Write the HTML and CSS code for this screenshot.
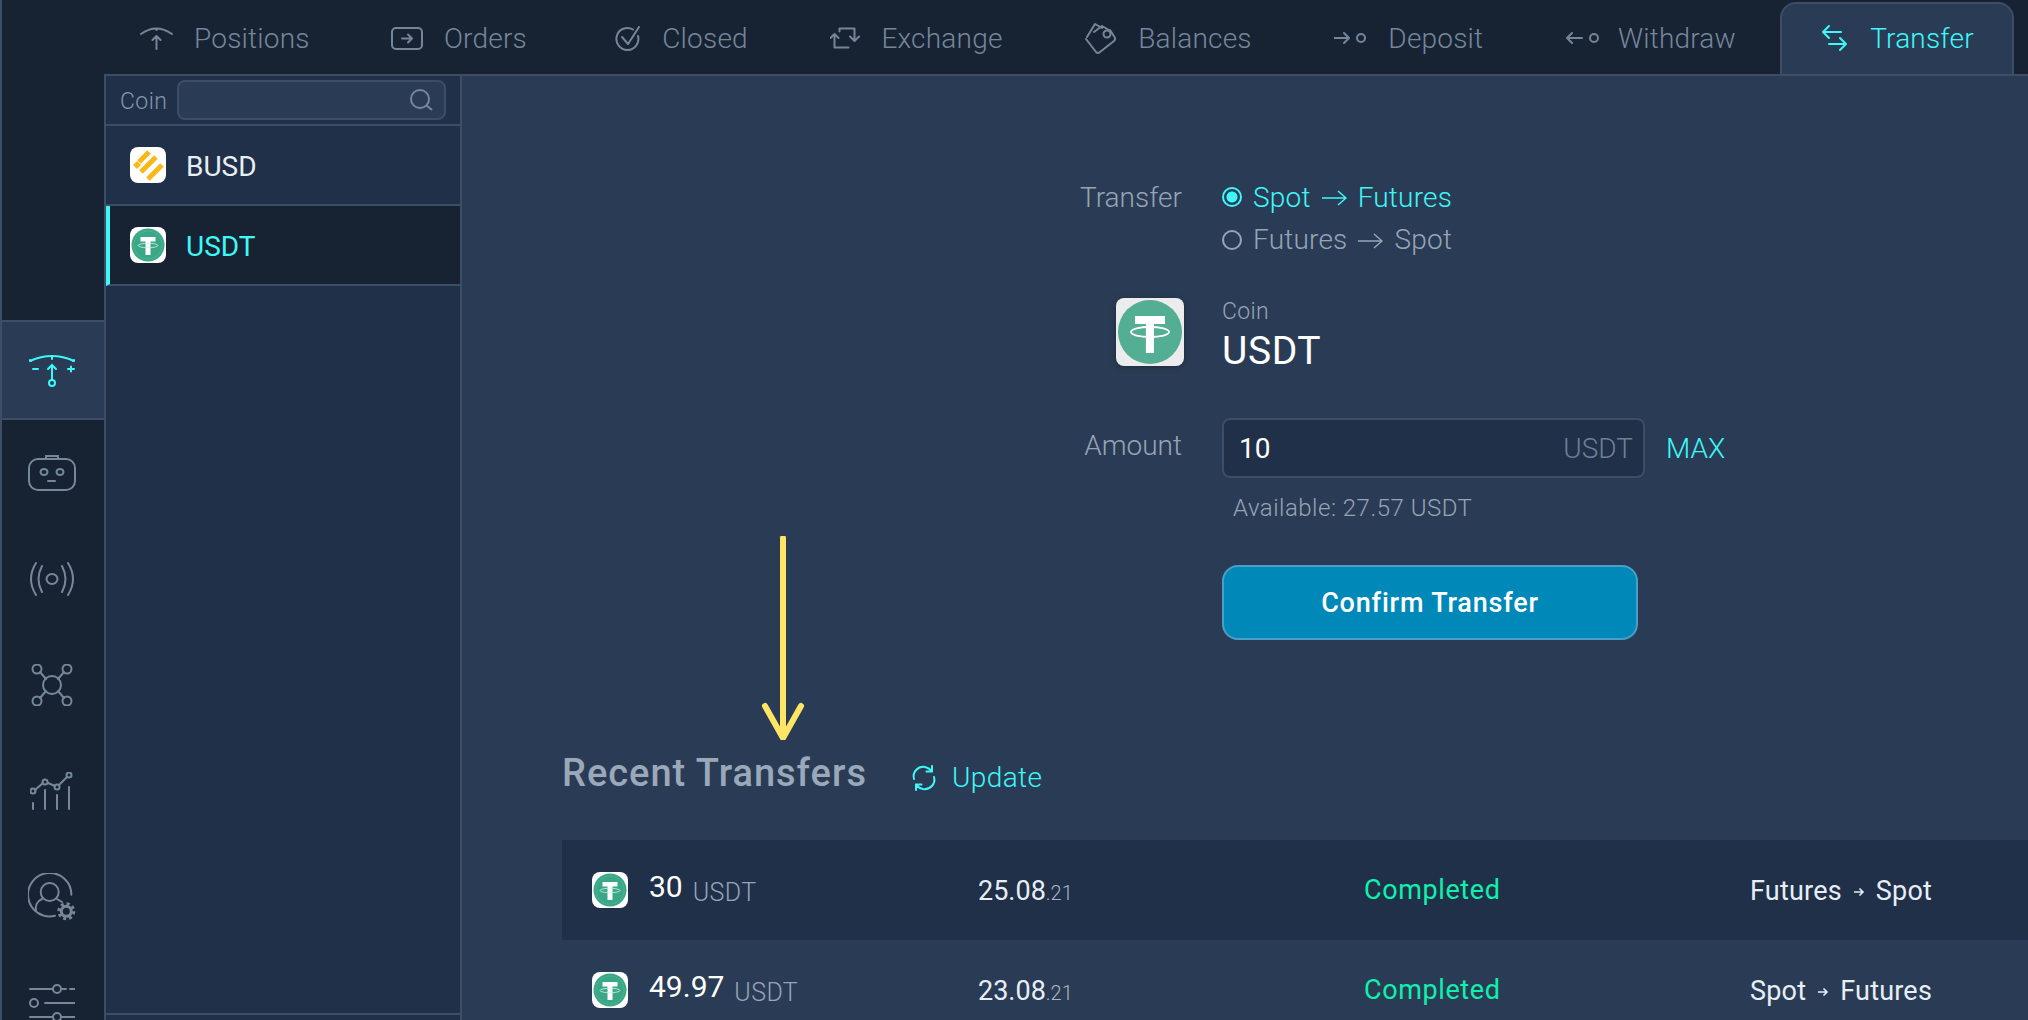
FILE: index.html
```html
<!DOCTYPE html>
<html lang="en-US">
<head>
  <meta charset="UTF-8">
  <meta name="viewport" content="width=device-width">
  <title>Transfer</title>
  <link rel="stylesheet" href="styles.css">
</head>
<body>

<svg class="defs" width="0" height="0">
  <symbol id="usdt" viewBox="0 0 36 36">
    <rect width="36" height="36" rx="8" fill="#fff"/>
    <circle cx="18" cy="18" r="16.500" fill="#3aa886"/>
    <circle cx="18" cy="18" r="14" fill="none" stroke="#62bda2" stroke-width="1" stroke-dasharray="1 1"/>
    <path d="M10.500 10h15v4.500h-5v13.500h-5V14.500h-5z" fill="#fff"/>
    <ellipse cx="18" cy="18.500" rx="10" ry="2.200" fill="none" stroke="#d5efe6" stroke-width=".8"/>
  </symbol>
  <symbol id="busd" viewBox="0 0 36 36">
    <rect width="36" height="36" rx="8" fill="#fff"/>
    <path d="M19 5L9 15M26 10L11 25M32 18L18 32" fill="none" stroke="#f8b916" stroke-width="5"/>
    <path d="M7 14l4 4-4 4-4-4z" fill="#f8b916"/>
  </symbol>
  <symbol id="arrow" viewBox="0 0 25 16">
    <path d="M0 8h24M16 1l8 7-8 7" fill="none" stroke="currentColor" stroke-width="1.500"/>
  </symbol>
  <symbol id="small-arrow" viewBox="0 0 12 12">
    <path d="M1 6h9M6.500 2.500L10 6l-3.500 3.500" fill="none" stroke="currentColor" stroke-width="1.600"/>
  </symbol>
</svg>

<div class="app">
  <nav class="rail">
    <a class="rail-item active">
      <svg width="48" height="36" viewBox="0 0 48 36" fill="none">
        <path d="M2 9Q24-1 46 9"/><path d="M24 4v3M3 9l-1-1M45 9l1-1"/>
        <path d="M5 17h5M40 17h6M43 14.500v5"/>
        <path d="M24 28V13M20 17l4-4 4 4"/><circle cx="24" cy="31" r="3"/>
      </svg>
    </a>
    <a class="rail-item">
      <svg width="48" height="38" viewBox="0 0 48 38" fill="none">
        <rect x="1" y="5" width="46" height="31" rx="9"/><path d="M18 5V2h12v3"/>
        <ellipse cx="16" cy="18" rx="3.500" ry="3"/><ellipse cx="32" cy="18" rx="3.500" ry="3"/><path d="M20 27h7"/>
      </svg>
    </a>
    <a class="rail-item">
      <svg width="46" height="34" viewBox="0 0 46 34" fill="none">
        <ellipse cx="23" cy="17" rx="5.500" ry="5"/>
        <path d="M13 4Q6 17 13 30M33 4q7 13 0 26M7 1Q-3 17 7 33M39 1q10 16 0 32"/>
      </svg>
    </a>
    <a class="rail-item">
      <svg width="42" height="42" viewBox="0 0 42 42" fill="none">
        <ellipse cx="21" cy="21" rx="9" ry="9"/>
        <circle cx="6" cy="5" r="4.500"/><circle cx="36" cy="5" r="4.500"/><circle cx="6" cy="37" r="4.500"/><circle cx="36" cy="37" r="4.500"/>
        <path d="M9 8l6 7M33 8l-6 7M9 34l6-7M33 34l-6-7"/>
      </svg>
    </a>
    <a class="rail-item">
      <svg width="44" height="38" viewBox="0 0 44 38" fill="none">
        <circle cx="3" cy="19" r="2.500"/><circle cx="15" cy="10" r="2.500"/><circle cx="27" cy="15" r="2.500"/><circle cx="39" cy="3" r="2.500"/>
        <path d="M5 18l8-7M18 11l7 3M29 13l8-8"/>
        <path d="M3 31v6M15 18v19M27 23v14M39 15v22"/>
      </svg>
    </a>
    <a class="rail-item">
      <svg width="48" height="48" viewBox="0 0 48 48" fill="none">
        <path d="M27 42.700A21.700 21.700 0 1 1 43.400 21.700"/>
        <circle cx="21.700" cy="19" r="9"/>
        <path d="M8 38c-1-5 1-10 6-12M29 26l5 3"/>
        <circle cx="38.300" cy="38.300" r="5" stroke-width="3"/>
        <circle cx="38.300" cy="38.300" r="7.500" stroke-width="3" stroke-dasharray="3 2.900" stroke-linecap="butt"/>
      </svg>
    </a>
    <a class="rail-item">
      <svg width="46" height="38" viewBox="0 0 46 38" fill="none">
        <path d="M1 5h23M33 5h4M41 5h5"/><circle cx="28" cy="5" r="4"/>
        <circle cx="5" cy="19" r="4"/><path d="M16 19h30"/>
        <path d="M1 33h23M33 33h13"/><circle cx="28" cy="33" r="4"/>
      </svg>
    </a>
  </nav>

  <div class="main">
    <div class="tabs">
      <a class="tab first">
        <svg width="33" height="24" viewBox="0 0 33 24" fill="none"><path d="M1 8Q16-3 32 8M16.500 3v1M16.500 23V10M12.500 14l4-4 4 4"/></svg>
        <span>Positions</span>
      </a>
      <a class="tab">
        <svg width="32" height="23" viewBox="0 0 32 23" fill="none"><rect x="1" y="1" width="30" height="21" rx="4"/><path d="M11 11.500h10M17 7.500l4 4-4 4"/></svg>
        <span>Orders</span>
      </a>
      <a class="tab closed">
        <svg width="26" height="25" viewBox="0 0 26 25" fill="none"><path d="M18 3.500A11 11 0 1 0 23 10M7 11l6 7L24 1"/></svg>
        <span>Closed</span>
      </a>
      <a class="tab">
        <svg width="30" height="22" viewBox="0 0 30 22" fill="none"><path d="M9.500 4.500V1.500h15V14M20 9.500l4.500 4.500 4.500-4.500M4.500 7v13.500h14M.5 11l4-4 4 4"/></svg>
        <span>Exchange</span>
      </a>
      <a class="tab">
        <svg width="32" height="32" viewBox="0 0 32 32" fill="none">
          <path d="M1 17L11 30Q13 32 15 30L29 19Q31 17 29.500 15L25 8M2 15L10 2l7 4M9 10l8-6 7 4"/>
          <circle cx="22" cy="12" r="3.500"/>
        </svg>
        <span>Balances</span>
      </a>
      <a class="tab">
        <svg width="33" height="14" viewBox="0 0 33 14" fill="none"><path d="M0 7h15M10 2l5 5-5 5"/><circle cx="27" cy="7" r="4"/></svg>
        <span>Deposit</span>
      </a>
      <a class="tab withdraw">
        <svg width="34" height="14" viewBox="0 0 34 14" fill="none"><path d="M16 7H1M6 2L1 7l5 5"/><circle cx="28" cy="7" r="4"/></svg>
        <span>Withdraw</span>
      </a>
      <a class="tab current">
        <svg width="25" height="26" viewBox="0 0 25 26" fill="none"><path d="M19 7H1M7 1L1 7l6 6M7 19h17M18 13l6 6-6 6"/></svg>
        <span>Transfer</span>
      </a>
    </div>

    <div class="body">
      <aside class="coins">
        <div class="coins-head">
          <span>Coin</span>
          <div class="search">
            <svg width="23" height="22" viewBox="0 0 23 22" fill="none"><circle cx="10" cy="10" r="9"/><path d="M16.500 16.500L22 21"/></svg>
          </div>
        </div>
        <div class="coin"><svg class="coin-icon"><use href="#busd"/></svg><span>BUSD</span></div>
        <div class="coin selected"><svg class="coin-icon"><use href="#usdt"/></svg><span>USDT</span></div>
        <div class="coins-list"></div>
        <div class="coins-foot"></div>
      </aside>

      <section class="content">
        <svg class="note-arrow" width="44" height="204" viewBox="0 0 44 204" fill="none">
          <path d="M22 2v198M4 170l18 32 18-32"/>
        </svg>

        <div class="form">
          <div class="label">Transfer</div>
          <div class="radios">
            <div class="radio on"><i></i>Spot<svg class="long-arrow"><use href="#arrow"/></svg>Futures</div>
            <div class="radio"><i></i>Futures<svg class="long-arrow"><use href="#arrow"/></svg>Spot</div>
          </div>

          <div class="big-icon">
            <svg width="68" height="68" viewBox="0 0 68 68">
              <rect width="68" height="68" rx="8" fill="#ececec"/>
              <circle cx="34" cy="34" r="32" fill="#53ae94"/>
              <path d="M19 18h30v8H38v8.500l-.1 20.500h-8V26H19z" fill="#fff"/>
              <ellipse cx="34" cy="34" rx="19" ry="5" fill="none" stroke="#fff" stroke-width="1.800"/>
            </svg>
          </div>
          <div class="coin-name">
            <small>Coin</small>
            <strong>USDT</strong>
          </div>

          <div class="label amount-label">Amount</div>
          <div class="amount-row">
            <div class="amount">
              <span class="value">10</span>
              <span class="unit">USDT</span>
            </div>
            <a class="max">MAX</a>
          </div>

          <div></div>
          <div class="available">Available: 27.57 USDT</div>

          <div></div>
          <button class="confirm">Confirm Transfer</button>
        </div>

        <div class="recent-head">
          <h2>Recent Transfers</h2>
          <a class="update">
            <svg width="26" height="26" viewBox="0 0 26 26" fill="none">
              <path d="M3 14C1 7 7 1 14 2c3 .500 5 2 7 4M21 1v5.500h-5.500M23 12c2 7-4 13-11 12-3-.500-5-2-7-4M5 25v-5.500h5.500"/>
            </svg>
            Update
          </a>
        </div>

        <div class="row dark">
          <div class="cell"><svg class="coin-icon"><use href="#usdt"/></svg><span class="qty">30</span><span class="qty-unit">USDT</span></div>
          <div class="date">25.08<small>.21</small></div>
          <div class="status">Completed</div>
          <div class="route">Futures<svg class="route-arrow"><use href="#small-arrow"/></svg>Spot</div>
        </div>
        <div class="row">
          <div class="cell"><svg class="coin-icon"><use href="#usdt"/></svg><span class="qty">49.97</span><span class="qty-unit">USDT</span></div>
          <div class="date">23.08<small>.21</small></div>
          <div class="status">Completed</div>
          <div class="route">Spot<svg class="route-arrow"><use href="#small-arrow"/></svg>Futures</div>
        </div>
      </section>
    </div>
  </div>
</div>

</body>
</html>
```

FILE: styles.css
```css
html, body {
    margin: 0;
    height: 1020px;
    overflow: hidden;
    background: #2a3c55;
}
body {
    font-family: Roboto, "Liberation Sans", sans-serif;
    font-size: 28px;
    color: #e8eef6;
}
.defs {
    position: absolute;
}
.app {
    display: flex;
    height: 1020px;
}

/* left rail */
.rail {
    box-sizing: border-box;
    width: 104px;
    flex: none;
    padding-top: 320px;
    background: #172333;
    border-left: 2px solid #3c4e66;
}
.rail-item {
    height: 106px;
    display: flex;
    align-items: center;
    justify-content: center;
    padding-right: 2px;
}
.rail-item svg {
    stroke: #77879a;
    stroke-width: 2;
    stroke-linecap: round;
}
.rail-item.active {
    box-sizing: border-box;
    height: 100px;
    background: #2a3c55;
    border-top: 2px solid #3c4e66;
    border-bottom: 2px solid #3c4e66;
}
.rail-item.active svg {
    stroke: #3ef8f8;
}

/* tabs */
.main {
    flex: 1;
    min-width: 0;
    display: flex;
    flex-direction: column;
}
.tabs {
    box-sizing: border-box;
    height: 76px;
    flex: none;
    display: flex;
    padding-top: 2px;
    background: #172333;
    border-bottom: 2px solid #3c4e66;
    color: #76869a;
    font-weight: 300;
    letter-spacing: .2px;
}
.tab {
    display: flex;
    align-items: center;
    gap: 21px;
    padding: 0 41.3px;
}
.tab.first {
    padding: 0 40px 0 36px;
}
.tab.closed {
    padding-left: 47px;
}
.tab.withdraw {
    gap: 18px;
}
.tab svg {
    flex: none;
    stroke: #76869a;
    stroke-width: 2;
    stroke-linecap: round;
    stroke-linejoin: round;
}
.tab.current {
    box-sizing: border-box;
    gap: 23px;
    margin-left: 3px;
    padding: 0 38px 2px 40px;
    color: #3ef8f8;
    background: #2a3c55;
    border: 2px solid #3c4e66;
    border-bottom: 0;
    border-radius: 16px 16px 0 0;
}
.tab.current svg {
    stroke: #3ef8f8;
}

.body {
    flex: 1;
    display: flex;
    min-height: 0;
}

/* coin list */
.coins {
    box-sizing: border-box;
    width: 358px;
    flex: none;
    display: flex;
    flex-direction: column;
    background: #1f3048;
    border-left: 2px solid #3c4e66;
    border-right: 2px solid #3c4e66;
}
.coins-head {
    box-sizing: border-box;
    height: 50px;
    display: flex;
    align-items: center;
    gap: 10px;
    padding: 0 14px;
    background: #1f3048;
    border-bottom: 2px solid #3c4e66;
    font-size: 23px;
    font-weight: 300;
    letter-spacing: .4px;
    color: #8795a8;
}
.coins-head span {
    padding-top: 2px;
}
.search {
    box-sizing: border-box;
    flex: 1;
    height: 40px;
    display: flex;
    align-items: center;
    justify-content: flex-end;
    padding-right: 11px;
    background: #2a3c55;
    border: 2px solid #3c4e66;
    border-radius: 8px;
}
.search svg {
    stroke: #77879a;
    stroke-width: 2;
}
.coin {
    box-sizing: border-box;
    height: 80px;
    display: flex;
    align-items: center;
    gap: 20px;
    padding-left: 24px;
    border-bottom: 2px solid #3c4e66;
}
.coin span {
    padding-top: 3px;
}
.coin-icon {
    width: 36px;
    height: 36px;
    flex: none;
}
.coin.selected {
    color: #3ef8f8;
    background: #172333;
    border-left: 4px solid #3ef8f8;
    padding-left: 20px;
}
.coins-list {
    flex: 1;
}
.coins-foot {
    height: 5px;
    border-top: 2px solid #3c4e66;
}

/* transfer form */
.content {
    flex: 1;
    min-width: 0;
    position: relative;
    padding: 100px 0 0 100px;
    background: #2a3c55;
}
.note-arrow {
    position: absolute;
    left: 299px;
    top: 460px;
    stroke: #ffe566;
    stroke-width: 6;
    stroke-linecap: round;
    stroke-linejoin: round;
}
.form {
    display: grid;
    grid-template-columns: 620px 1fr;
    column-gap: 40px;
}
.label {
    text-align: right;
    font-weight: 300;
    color: #97a4b6;
    line-height: 43px;
}
.radios {
    height: 86px;
}
.radio {
    display: flex;
    align-items: center;
    height: 42.5px;
    font-weight: 300;
    letter-spacing: .2px;
    color: #97a4b6;
}
.radio i {
    box-sizing: border-box;
    width: 20px;
    height: 20px;
    margin-right: 11px;
    border: 2px solid #97a4b6;
    border-radius: 50%;
}
.long-arrow {
    width: 25px;
    height: 16px;
    margin: 2px 11px 0;
}
.radio.on {
    color: #3ef8f8;
}
.radio.on i {
    border-color: #3ef8f8;
    background: radial-gradient(circle, #3ef8f8 5px, transparent 6px);
}
.big-icon {
    display: flex;
    justify-content: flex-end;
    margin: 36px -2px 0 0;
}
.big-icon svg {
    filter: drop-shadow(0 1px 3px rgba(0, 0, 0, .3));
}
.coin-name {
    height: 67px;
    margin-top: 37px;
}
.coin-name small {
    display: block;
    font-size: 23px;
    font-weight: 300;
    letter-spacing: .3px;
    line-height: 26px;
    color: #97a4b6;
}
.coin-name strong {
    display: block;
    margin-top: 4px;
    font-size: 39px;
    font-weight: 400;
    letter-spacing: .6px;
    line-height: 44px;
    color: #fff;
}
.amount-label {
    margin-top: 52px;
    line-height: 56px;
}
.amount-row {
    display: flex;
    align-items: center;
    gap: 21px;
    margin-top: 52px;
}
.amount {
    box-sizing: border-box;
    width: 423px;
    height: 60px;
    display: flex;
    align-items: center;
    justify-content: space-between;
    padding: 0 10px 0 15px;
    background: #1f3048;
    border: 2px solid #3c4e66;
    border-radius: 8px;
}
.value {
    color: #fff;
}
.unit {
    font-weight: 300;
    color: #6f7f93;
}
.max {
    color: #3ef8f8;
    font-weight: 300;
}
.available {
    margin: 16px 0 0 11px;
    font-size: 24px;
    letter-spacing: .5px;
    line-height: 28px;
    font-weight: 300;
    color: #97a4b6;
}
.confirm {
    box-sizing: border-box;
    width: 416px;
    height: 75px;
    margin-top: 43px;
    font: 500 27px Roboto, sans-serif;
    letter-spacing: .8px;
    color: #fff;
    background: #0088b8;
    border: 2px solid #4a9fc8;
    border-radius: 16px;
}

/* recent transfers */
.recent-head {
    display: flex;
    align-items: center;
    gap: 44px;
    margin-top: 108px;
    height: 50px;
}
.recent-head h2 {
    margin: 0;
    font-size: 38px;
    font-weight: 500;
    letter-spacing: 1px;
    color: #9ba8ba;
}
.update {
    display: flex;
    align-items: center;
    gap: 15px;
    margin-top: 9px;
    font-weight: 300;
    letter-spacing: .4px;
    color: #3ef8f8;
}
.update svg {
    stroke: #3ef8f8;
    stroke-width: 2;
    stroke-linecap: round;
}
.row {
    display: grid;
    grid-template-columns: 386px 386px 386px auto;
    align-items: center;
    height: 100px;
    padding-left: 30px;
    overflow: hidden;
    font-size: 27px;
}
.recent-head + .row {
    margin-top: 42px;
}
.row.dark {
    background: #1f3048;
}
.cell {
    display: flex;
    align-items: center;
}
.qty {
    margin: -7px 0 0 21px;
    font-size: 30px;
    color: #fff;
}
.qty-unit {
    margin: 5px 0 0 10px;
    font-size: 25px;
    font-weight: 300;
    letter-spacing: .4px;
    color: #97a4b6;
}
.date {
    padding-top: 2px;
}
.date small {
    font-size: 20px;
    font-weight: 300;
    color: #aab6c6;
}
.status {
    font-weight: 400;
    letter-spacing: .6px;
    color: #10f0ae;
}
.route {
    display: flex;
    align-items: center;
    padding-top: 2px;
    letter-spacing: .2px;
}
.route-arrow {
    width: 12px;
    height: 12px;
    margin: 2px 11px 0;
}
```
